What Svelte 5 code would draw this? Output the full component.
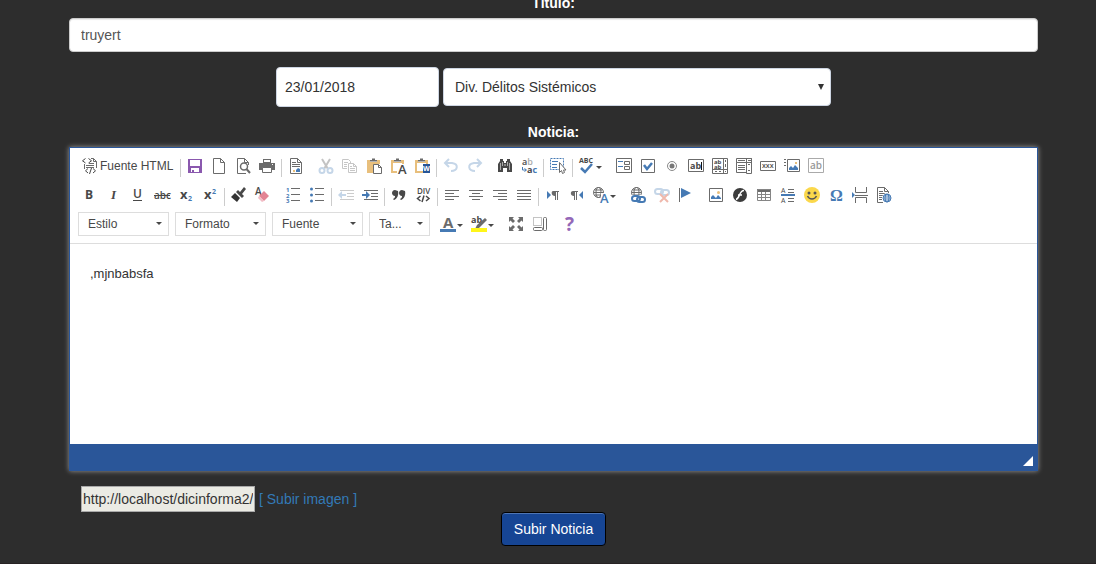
<script>
    let title = "truyert";
    let date = "23/01/2018";
    let division = "Div. Délitos Sistémicos";
    let body = ",mjnbabsfa";
    let imageUrl = "http://localhost/dicinforma2/";

    const G = "#6b6b6b";
    const D = "#484848";
    const B = "#467ab4";
    const L = "#c5d6e8";

    const text = (x, y, size, fill, value, extra = "") =>
        `<text x="${x}" y="${y}" font-size="${size}" fill="${fill}" ${extra}>${value}</text>`;
    const lines = (d, color = G) =>
        `<path d="${d}" fill="none" stroke="${color}"/>`;
    const clipboard = `<path d="M1 2h3v2h7V2h3v4H8v9H1z" fill="#e8bf7c"/><path d="M4 3.5V2h2V.5h3V2h2v1.5z" fill="${G}"/>`;
    const picture = `<path d="M3 12V10l2-2 3 3 2-3 3 3v1z" fill="${B}"/><circle cx="10.5" cy="5.5" r="1.5" fill="#e8bf7c"/>`;
    const globe = (x, y, r, color) =>
        `<g fill="none" stroke="${color}"><circle cx="${x}" cy="${y}" r="${r}"/><ellipse cx="${x}" cy="${y}" rx="${r / 2}" ry="${r}"/><path d="M${x - r} ${y}h${2 * r}M${x - r + 1} ${y - r / 2}h${2 * r - 2}M${x - r + 1} ${y + r / 2}h${2 * r - 2}"/></g>`;
    const chain = (color) =>
        `<g fill="none" stroke="${color}" stroke-width="2"><rect x="2" y="9" width="8" height="5" rx="2.5"/><rect x="7" y="10" width="8" height="5" rx="2.5"/></g>`;

    const icons = {
        source: lines("M3.5.5L.5 2.8l3 2.2M6.500.5l3 2.300-3 2.200", D) + lines("M9 .500h2.500l3 3V10M11.500.500v3h3M7 5.500h5M4 7.500h8M2.500 6v5M4 9.500h8") + lines("M6 10.500L3.500 12.800l2.500 2.200M11 10.500l2.500 2.300-2.500 2.200M9.500 10l-2 6", D),
        save: `<path d="M1 1h14v14H1z" fill="#8a58ae"/><path d="M3 2h10v6H3zM4 10h8v4H4z" fill="#fff"/><path d="M5 12h2v2H5z" fill="#8a58ae"/>`,
        newpage: lines("M2.500.500h7l4 4v11h-11zM9.500.500v4h4"),
        preview: lines("M11 15.500H2.500V.500h7l4 4V7M9.500.500v4h4") + `<circle cx="9" cy="8.500" r="3.500" fill="none" stroke="${G}" stroke-width="1.500"/><path d="M11.500 11l3.500 4" stroke="${G}" stroke-width="2"/>`,
        print: `<path d="M4 1h8v4H4zM0 5h16v7h-3v-2H3v2H0z" fill="${G}"/><path d="M5 2h6v2H5z" fill="#fff"/><path d="M3.500 9.500h9v5h-9z" fill="#fff" stroke="${G}"/><path d="M13 6h1v1h-1z" fill="#fff"/>`,
        templates: lines("M2.500.500h7l4 4v11h-11zM9.500.500v4h4") + lines("M4 4.500h4M4 6.500h8M4 8.500h8") + `<path d="M8 14v-2l2-2 2 1v3z" fill="${B}"/><path d="M5 12h2v2H5z" fill="#e8bf7c"/>`,
        cut: `<g fill="none" stroke="#c3c3c3" stroke-width="2"><path d="M4 1l6 10M12 1L6 11"/></g><g fill="none" stroke="${L}" stroke-width="2"><circle cx="4" cy="12.500" r="2.500"/><circle cx="12" cy="12.500" r="2.500"/></g>`,
        copy: lines("M5 10.500H.500v-9h6l2 2V5M2 4.500h4M2 6.500h3M2 8.500h3M6.500 5.500h5l3 3v6h-8zM11.500 5.500v3h3M8 8.500h2M8 10.500h5M8 12.500h5", "#c6c6c6"),
        paste: clipboard + `<path d="M7.500 6.500h5l3 3v6h-8z" fill="#fff" stroke="${G}"/>` + lines("M12.500 6.500v3h3"),
        pastetext: `<path d="M1 2h3v2h7V2h3v4h-2V5H3v8h4v2H1z" fill="#e8bf7c"/><path d="M4 3.500V2h2V.500h3V2h2v1.500z" fill="${G}"/>` + text(8, 16, 13, D, "A", 'font-weight="600"'),
        pasteword: `<path d="M1 2h3v2h7V2h3v4h-2V5H3v8h6v2H1z" fill="#e8bf7c"/><path d="M4 3.500V2h2V.500h3V2h2v1.500z" fill="${G}"/><path d="M9 6h7v9H9z" fill="#275597"/>` + text(9, 13, 7, "#fff", "W", 'font-weight="bold"'),
        undo: `<path d="M6 1L2 5l4 4M2 5h7c7 1 6 8-1 8" fill="none" stroke="${L}" stroke-width="2"/>`,
        redo: `<path d="M10 1l4 4-4 4M14 5H7c-7 1-6 8 1 8" fill="none" stroke="${L}" stroke-width="2"/>`,
        find: `<path d="M3 1h3v2h1v2h2V3h1V1h3v2l2 3v8h-5v-4H6v4H1V6l2-3z" fill="${D}"/><path d="M3.500 5v7M12.500 5v7M5.500 4v4M10.500 4v4" stroke="#aaa"/><path d="M7 6h2v2H7z" fill="#888"/>`,
        replace: text(1, 7, 9, D, 'a<tspan fill="#aaa">b</tspan>', 'font-weight="600"') + text(6, 15, 9, D, `a<tspan fill="${B}">c</tspan>`, 'font-weight="bold"') + `<path d="M1.500 9v3H5M3.500 10.500l2 1.500-2 1.500" fill="none" stroke="${B}"/>`,
        selectall: `<path d="M.500.500h13v11H.500z" fill="none" stroke="${B}" stroke-dasharray="2 1"/>` + lines("M2 3.500h6M2 6.500h5M2 9.500h5", B) + `<path d="M9.500 4.500v10l2-2 1 3 2-1-1-2.500h2.500z" fill="#fff" stroke="${G}"/>`,
        spell: text(0, 5, 7, D, "ABC", 'font-weight="bold"') + `<path d="M2 10l4 4 7-8" fill="none" stroke="${B}" stroke-width="2.500"/>`,
        form: lines("M.500.500h15v14H.500zM8.500 3.500h5v3h-5zM8.500 8.500h5v3h-5z") + lines("M2 3.500h5M2 8.500h5", B),
        checkbox: lines("M1.500 1.500h13v13h-13z") + `<path d="M4 7l3 4 5-6" fill="none" stroke="${B}" stroke-width="2.500"/>`,
        radio: `<circle cx="8" cy="8" r="4.500" fill="none" stroke="#888"/><circle cx="8" cy="8" r="2.500" fill="#777"/>`,
        textfield: lines("M.500 1.500h15v12H.500z") + text(2, 11, 9, D, "ab", 'font-weight="bold"') + `<path d="M13.500 4v8" stroke="#111"/>`,
        textarea: lines("M.500.500h15v15H.500zM11.500 1v14M1 11.500h14M13.500 2v2M13.500 6v3M3 13.500h2M7 13.500h2M13 13.500h1") + text(2, 6, 6, D, "ab", 'font-weight="bold"') + text(2, 11, 6, D, "ab", 'font-weight="bold"'),
        select: lines("M.500.500h15v4H.500zM.500 4.500h10v10H.500zM10.500.500h5v15h-5zM2 2.500h7M2 7.500h7M2 9.500h7M2 11.500h7M12 2.500h3M12 6.500h2M12 12.500h2"),
        button: lines("M.500 3.500h15v9H.500z") + text(2, 10, 7, D, "xxx", 'font-weight="600"'),
        imagebutton: `<path d="M3.500 1.500h12v12h-12z" fill="none" stroke="${G}"/><path d="M5 12v-2l2-2 2 2 2-3 3 3v2z" fill="${B}"/><path d="M11 4h2v2h-2z" fill="#e8bf7c"/>` + lines("M0 1.500h2M0 4.500h2M0 7.500h2"),
        hidden: lines("M.500.500h15v14H.500z", "#aaa") + text(2, 11, 10, "#999", "ab", 'font-weight="600"'),

        bold: text(3, 12, 12, D, "B", 'font-weight="bold"'),
        italic: text(5, 12, 13, D, "I", 'font-style="italic" font-weight="bold" font-family="Liberation Serif, serif"'),
        underline: text(3, 11, 12, D, "U", 'font-weight="600"') + lines("M3 13.500h9", D),
        strike: text(0, 12, 10, D, "abc", 'font-weight="600"') + lines("M0 8.500h16", D),
        sub: text(2, 12, 13, D, "x", 'font-weight="bold"') + text(10, 14, 7, B, "2", 'font-weight="bold"'),
        sup: text(2, 12, 13, D, "x", 'font-weight="bold"') + text(10, 7, 7, B, "2", 'font-weight="bold"'),
        brush: `<path d="M13 0l2 2-4 5 2 2-2 2-6-6 2-2 2 2z" fill="${D}"/><path d="M4 6l5 5-3 4-6-5z" fill="#333"/>`,
        eraser: text(0, 8, 10, D, "A", 'font-weight="600"') + `<path d="M9 4l5 5-5 5-5-5z" fill="#e38494"/><path d="M4 9l5 5-2 1-4-4z" fill="#f2bcc5"/>`,
        numbers: text(1, 5, 6, B, "1", 'font-weight="bold"') + text(1, 11, 6, B, "2", 'font-weight="bold"') + text(1, 16, 6, B, "3", 'font-weight="bold"') + lines("M6 1.500h9M6 7.500h9M6 13.500h9"),
        bullets: `<g fill="${B}"><circle cx="2.500" cy="2" r="1.500"/><circle cx="2.500" cy="8" r="1.500"/><circle cx="2.500" cy="14" r="1.500"/></g>` + lines("M6 1.500h9M6 7.500h9M6 13.500h9"),
        outdent: lines("M2 3.500h14M9 6.500h7M9 9.500h7M2 12.500h14", "#ccc") + `<path d="M0 8l4-4v3h4v2H4v3z" fill="${L}"/>`,
        indent: lines("M2 3.500h14M9 6.500h7M9 9.500h7M2 12.500h14") + `<path d="M8 8L4 4v3H0v2h4v3z" fill="${B}"/>`,
        quote: `<path d="M7 4c1 4-1 8-4 9l-1-1c2-1 2-2 2-3-4 0-4-6 0-6zM14 4c1 4-1 8-4 9l-1-1c2-1 2-2 2-3-4 0-4-6 0-6z" fill="${D}"/>`,
        div: text(2, 7, 8, D, "DIV", 'font-weight="600"') + `<path d="M5.500 9l-3 2.500 3 2.500M11 9l3 2.500-3 2.500M9 8.500L7 15" fill="none" stroke="${D}" stroke-width="1.500"/>`,
        left: lines("M1 3.500h14M1 6.500h9M1 9.500h14M1 12.500h9"),
        center: lines("M1 3.500h14M4 6.500h8M1 9.500h14M4 12.500h8"),
        right: lines("M1 3.500h14M6 6.500h9M1 9.500h14M6 12.500h9"),
        justify: lines("M1 3.500h14M1 6.500h14M1 9.500h14M1 12.500h14"),
        ltr: `<path d="M2 4l4 4-4 4z" fill="${B}"/><path d="M8 4h6v1h-1v8h-1V5h-1v8h-1V9C6 9 6 4 8 4z" fill="${G}"/>`,
        rtl: `<path d="M14 4l-4 4 4 4z" fill="${B}"/><path d="M4 4h5v1H8v8H7V5H6v8H5V9C1 9 1 4 4 4z" fill="${G}"/>`,
        language: globe(5.5, 5.5, 5, G) + `<path d="M8 6h8v10H8z" fill="#fff"/>` + text(7, 16, 13, B, "A", 'font-weight="600"'),
        link: globe(6.5, 5.5, 5, G) + `<path d="M1 8h15v8H1z" fill="#fff"/>` + chain(B),
        unlink: `<g fill="none" stroke="${L}" stroke-width="2"><rect x="1" y="2" width="8" height="5" rx="2.500"/><rect x="7" y="3" width="8" height="5" rx="2.500"/></g><path d="M6 7l8 8M14 7l-8 8" stroke="#efb8ac" stroke-width="2"/>`,
        anchor: `<path d="M1.500 1v14" stroke="${G}"/><path d="M3 1l10 5-10 5z" fill="${B}"/>`,
        image: lines("M1.500 1.500h13v13h-13z") + picture,
        flash: `<circle cx="8" cy="8" r="7" fill="#3c3c3c"/><path d="M12 3.500c-5 0-4 8-8 9M6 8h4" fill="none" stroke="#fff" stroke-width="1.500"/>`,
        table: `<path d="M1 2h14v3H1z" fill="${G}"/>` + lines("M1.500 2.500h13v11h-13zM1 7.500h14M1 10.500h14M5.500 5v9M9.500 5v9", "#858585"),
        hr: `<path d="M1 7h14v2H1z" fill="${B}"/>` + lines("M8 2.500h6M8 5.500h6M8 11.500h6M8 14.500h6") + text(1, 6, 7, D, "A") + text(1, 16, 7, D, "A"),
        smiley: `<circle cx="8" cy="8" r="8" fill="#fbd84b"/><circle cx="5" cy="6" r="1.500" fill="#555"/><circle cx="11" cy="6" r="1.500" fill="#555"/><path d="M3.500 9c2 4 7 4 9 0" fill="none" stroke="#555" stroke-width="1.500"/>`,
        omega: text(2, 14, 16, B, "Ω", 'font-weight="bold" font-family="Liberation Serif, serif"'),
        pagebreak: lines("M3.500 0v5.500h11V0M3.500 16v-5.500h11V16M3 8.500h13") + `<path d="M0 5l3 3-3 3z" fill="${B}"/>`,
        iframe: lines("M7 15.500H1.500V.500h7l4 4V7M8.500.500v4h4M3 4.500h4M3 6.500h7M3 8.500h5M3 10.500h3M3 12.500h3") + `<circle cx="11" cy="11" r="5" fill="#fff"/>` + globe(11, 11, 4, B),

        color: text(3, 12, 15, G, "A", 'font-weight="bold"') + `<path d="M0 13h16v3H0z" fill="${B}"/>`,
        highlight: text(0, 7, 9, D, "ab", 'font-weight="bold"') + `<path d="M14 2l2 2-8 8-4 1 2-4z" fill="${G}"/><path d="M0 12h16v4H0z" fill="#fff61a"/>`,
        maximize: `<path d="M1 1h5L4.500 2.500 7 5 5 7 2.500 4.500 1 6zM15 1h-5l1.500 1.500L9 5l2 2 2.500-2.500L15 6zM1 15h5l-1.500-1.500L7 11 5 9l-2.500 2.500L1 10zM15 15h-5l1.500-1.500L9 11l2-2 2.500 2.500L15 10z" fill="${G}"/>`,
        blocks: `<path d="M1.500 1.500h8v8h-8z" fill="none" stroke="#888" stroke-dasharray="1 1"/><rect x="1.500" y="11.500" width="9" height="3" rx="1" fill="none" stroke="${G}"/><rect x="11.500" y="1.500" width="3" height="13" rx="1" fill="none" stroke="${G}"/>`,
        about: text(3, 15, 19, "#9468b8", "?", 'font-weight="bold"')
    };

    // "-" is a separator, a trailing "+" adds a dropdown arrow
    const rows = [
        [
            "source - save newpage preview print - templates",
            "cut copy paste pastetext pasteword - undo redo",
            "find replace - selectall - spell+",
            "form checkbox radio textfield textarea select button imagebutton hidden"
        ],
        [
            "bold italic underline strike sub sup - brush eraser",
            "numbers bullets - outdent indent - quote div - left center right justify - ltr rtl language+",
            "link unlink anchor",
            "image flash table hr smiley omega pagebreak iframe"
        ]
    ];

    const combos = ["Estilo", "Formato", "Fuente", "Ta..."];
    const lastRow = ["color+ highlight+", "maximize blocks", "about"];
</script>

{#snippet group(items)}
    <div class="group">
        {#each items.split(" ") as item}
            {@const name = item.replace("+", "")}
            {#if item === "-"}
                <span class="separator"></span>
            {:else}
                <button type="button" class="tool" aria-label={name === "source" ? null : name}>
                    <svg width="16" height="16" viewBox="0 0 16 16" aria-hidden="true">{@html icons[name]}</svg>
                    {#if name === "source"}<span class="tool-label">Fuente HTML</span>{/if}
                    {#if item.endsWith("+")}<span class="arrow"></span>{/if}
                </button>
            {/if}
        {/each}
    </div>
{/snippet}

<form class="page" on:submit|preventDefault>
    <label class="heading" for="title">Título:</label>
    <input id="title" class="control title" bind:value={title}>

    <div class="meta">
        <input class="control date" aria-label="Fecha" bind:value={date}>
        <div class="division">
            <select class="control" aria-label="División" bind:value={division}>
                <option>Div. Délitos Sistémicos</option>
            </select>
        </div>
    </div>

    <label class="heading" for="body">Noticia:</label>
    <div class="editor">
        <div class="toolbar">
            {#each rows as row}
                <div class="row">
                    {#each row as items}
                        {@render group(items)}
                    {/each}
                </div>
            {/each}
            <div class="row">
                {#each combos as combo}
                    <div class="combo" class:small={combo === "Ta..."}>
                        <select aria-label={combo}>
                            <option>{combo}</option>
                        </select>
                        <span class="arrow"></span>
                    </div>
                {/each}
                {#each lastRow as items}
                    {@render group(items)}
                {/each}
            </div>
        </div>
        <textarea id="body" bind:value={body} spellcheck="false"></textarea>
        <div class="status"><span class="resizer"></span></div>
    </div>

    <div class="upload">
        <input aria-label="Imagen" bind:value={imageUrl} readonly>
        <a href="#subir">[ Subir imagen ]</a>
    </div>

    <button class="submit">Subir Noticia</button>
</form>

<style>
    :global(body) {
        background: #2d2d2d;
        overflow: hidden;
    }

    .page, .page :global(*) {
        box-sizing: border-box;
    }

    .page {
        display: flex;
        flex-direction: column;
        margin-top: -7px;
        padding: 0 58px 17px 69px;
        border-bottom: 1px solid #272223;
        font: 14px/20px "Liberation Sans", Arial, sans-serif;
        color: #333;
    }

    input, select, textarea, button {
        margin: 0;
        font-family: inherit;
        font-size: inherit;
        line-height: inherit;
        color: inherit;
    }

    .heading {
        margin-bottom: 5px;
        text-align: center;
        font-weight: bold;
        color: #fff;
    }

    .control {
        height: 38px;
        padding: 6px 12px;
        background: #fff;
        border: 1px solid #cdd5e2;
        border-radius: 4px;
    }

    .title {
        width: 100%;
        height: 34px;
        padding: 6px 11px;
        border-color: #ccc;
        color: #555;
        box-shadow: inset 0 1px 1px rgba(0,0,0,.08);
    }

    .meta {
        display: flex;
        justify-content: center;
        align-items: center;
        gap: 4px;
        margin: 15px 0;
    }

    .date {
        width: 163px;
        height: 40px;
        padding: 6px 8px;
    }

    .division {
        position: relative;
        width: 388px;
    }

    .division select {
        display: block;
        width: 100%;
        padding: 6px 11px;
        appearance: none;
    }

    .division::after {
        content: "";
        position: absolute;
        top: 16px;
        right: 7px;
        border: 3px solid transparent;
        border-top: 6px solid #333;
        border-bottom: 0;
    }

    .editor {
        border: 1px solid #2a5699;
        box-shadow: 0 0 5px #999;
        background: #fff;
    }

    .toolbar {
        display: flex;
        flex-direction: column;
        gap: 5px;
        padding: 6px 8px 7px;
        border-bottom: 1px solid #ddd;
    }

    .row {
        display: flex;
        flex-wrap: wrap;
        gap: 6px;
    }

    .group {
        display: flex;
    }

    .tool {
        display: flex;
        align-items: center;
        height: 24px;
        padding: 4px;
        border: 0;
        background: none;
    }

    .tool svg {
        display: block;
        flex: none;
        overflow: visible;
        font-family: "Open Sans", sans-serif;
    }

    .tool-label {
        width: 76px;
        padding-left: 2px;
        white-space: nowrap;
        text-align: left;
        font-size: 12px;
        line-height: 16px;
        color: #484848;
    }

    .separator {
        width: 1px;
        height: 18px;
        margin: 5px 2px 0;
        background: #ccc;
    }

    .arrow {
        margin: 2px 0 0 1px;
        border: 3px solid transparent;
        border-top-color: #484848;
        border-bottom: 0;
        pointer-events: none;
    }

    .combo {
        position: relative;
        width: 91px;
        height: 24px;
    }

    .combo.small {
        width: 61px;
    }

    .combo select {
        width: 100%;
        height: 24px;
        padding: 0 9px;
        border: 1px solid #ddd;
        background: #fff;
        appearance: none;
        font-size: 12px;
        color: #484848;
    }

    .combo .arrow {
        position: absolute;
        top: 8px;
        right: 7px;
    }

    textarea {
        display: block;
        width: 100%;
        height: 200px;
        padding: 20px;
        border: 0;
        outline: 0;
        resize: none;
        font-size: 13px;
    }

    .status {
        display: flex;
        justify-content: flex-end;
        align-items: flex-end;
        height: 26px;
        padding: 4px;
        background: #2a5699;
    }

    .resizer {
        border: 5px solid #fff;
        border-top-color: transparent;
        border-left-color: transparent;
    }

    .upload {
        display: flex;
        align-items: center;
        gap: 4px;
        margin-top: 15px;
        padding-left: 12px;
    }

    .upload input {
        width: 174px;
        height: 26px;
        padding: 1px;
        border: 1px solid #a9a9a9;
        background: #ebebe4;
    }

    .upload a {
        color: #337ab7;
        text-decoration: none;
    }

    .submit {
        align-self: center;
        height: 34px;
        padding: 0 12px;
        border: 1px solid #000;
        border-radius: 4px;
        background: #164594;
        box-shadow: inset 0 1px 0 #4e75b4;
        color: #fff;
    }
</style>
